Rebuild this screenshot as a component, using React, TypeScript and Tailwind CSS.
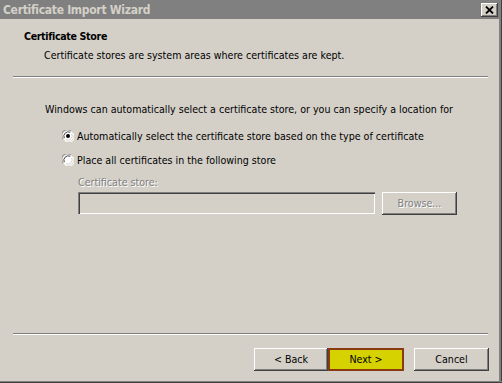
import React from "react";

const raised =
  "shadow-[inset_-1px_-1px_#404040,inset_1px_1px_#ffffff,inset_-2px_-2px_#808080,inset_2px_2px_#d4d0c8]";

function Radio({ checked }: { checked?: boolean }) {
  return (
    <svg width="12" height="12" viewBox="0 0 12 12" className="shrink-0">
      <circle cx="6" cy="6" r="5.5" fill="#ffffff" />
      <path d="M1.2 9 A5.5 5.5 0 0 1 9 1.2" stroke="#808080" strokeWidth="1" fill="none" />
      <path d="M2.3 8.2 A4.4 4.4 0 0 1 8.2 2.3" stroke="#404040" strokeWidth="1" fill="none" />
      <path d="M10.8 3 A5.5 5.5 0 0 1 3 10.8" stroke="#ffffff" strokeWidth="1" fill="none" />
      <path d="M9.7 3.8 A4.4 4.4 0 0 1 3.8 9.7" stroke="#d4d0c8" strokeWidth="1" fill="none" />
      {checked && <circle cx="6" cy="6" r="2" fill="#000000" />}
    </svg>
  );
}

function Sep() {
  return (
    <div className="flex flex-col mx-[13px] w-[475px]">
      <div className="h-px bg-[#808080]" />
      <div className="h-px bg-[#ffffff]" />
    </div>
  );
}

export default function App() {
  return (
    <div
      className="w-[502px] h-[383px] bg-[#d4d0c8] flex flex-col relative text-[10.6px] leading-[13px] text-black"
      style={{ fontFamily: '"DejaVu Sans Condensed", "Liberation Sans", Arial, sans-serif' }}
    >
      <div className="absolute top-0 right-0 bottom-0 w-[3px] bg-[#808080] border-r border-[#404040]" />
      <div className="absolute left-0 right-0 bottom-0 h-[2px] bg-[#808080] border-b border-[#404040]" />

      {/* Title bar */}
      <div className="h-[19px] bg-[#808080] flex items-center justify-between pl-[3px] pr-[4px]">
        <span className="text-[#d4d0c8] font-bold text-[12px] leading-[16px] tracking-[-0.3px]">
          Certificate Import Wizard
        </span>
        <div
          className={`w-[17px] h-[14px] bg-[#d4d0c8] flex items-center justify-center ${raised}`}
        >
          <svg width="9" height="8" viewBox="0 0 9 8">
            <path d="M1 0.5 L8 7.5 M8 0.5 L1 7.5" stroke="#000" strokeWidth="1.8" />
          </svg>
        </div>
      </div>

      {/* Header */}
      <div className="ml-[24px] mt-[11px] font-bold tracking-[-0.35px]">Certificate Store</div>
      <div className="ml-[44px] mt-[6px]">
        Certificate stores are system areas where certificates are kept.
      </div>
      <div className="mt-[14px]">
        <Sep />
      </div>

      {/* Body */}
      <div className="ml-[45px] mt-[25px]">
        Windows can automatically select a certificate store, or you can specify a location for
      </div>
      <div className="ml-[62px] mt-[13px] flex items-center gap-[3px] h-[14px]">
        <Radio checked />
        <span>Automatically select the certificate store based on the type of certificate</span>
      </div>
      <div className="ml-[62px] mt-[10px] flex items-center gap-[3px] h-[14px]">
        <Radio />
        <span>Place all certificates in the following store</span>
      </div>
      <div className="ml-[78px] mt-[9px] text-[#808080] [text-shadow:1px_1px_0_#ffffff]">
        Certificate store:
      </div>
      <div className="ml-[78px] mt-[3px] flex gap-[7px]">
        <div className="w-[297px] h-[22px] bg-[#d4d0c8] shadow-[inset_1px_1px_#808080,inset_2px_2px_#404040,inset_-1px_-1px_#ffffff,inset_-2px_-2px_#d4d0c8]" />
        <div
          className={`w-[75px] h-[23px] flex items-center justify-center text-[#808080] [text-shadow:1px_1px_0_#ffffff] ${raised}`}
        >
          Browse...
        </div>
      </div>

      {/* Footer */}
      <div className="mt-auto">
        <Sep />
      </div>
      <div className="mt-[13px] mb-[12px] ml-[254px] flex">
        <div className={`w-[74px] h-[23px] flex items-center justify-center ${raised}`}>
          &lt; Back
        </div>
        <div className="w-[76px] h-[23px] flex items-center justify-center bg-[#d6d200] border-2 border-[#8a3a10]">
          Next &gt;
        </div>
        <div className={`ml-[10px] w-[75px] h-[23px] flex items-center justify-center ${raised}`}>
          Cancel
        </div>
      </div>
    </div>
  );
}
